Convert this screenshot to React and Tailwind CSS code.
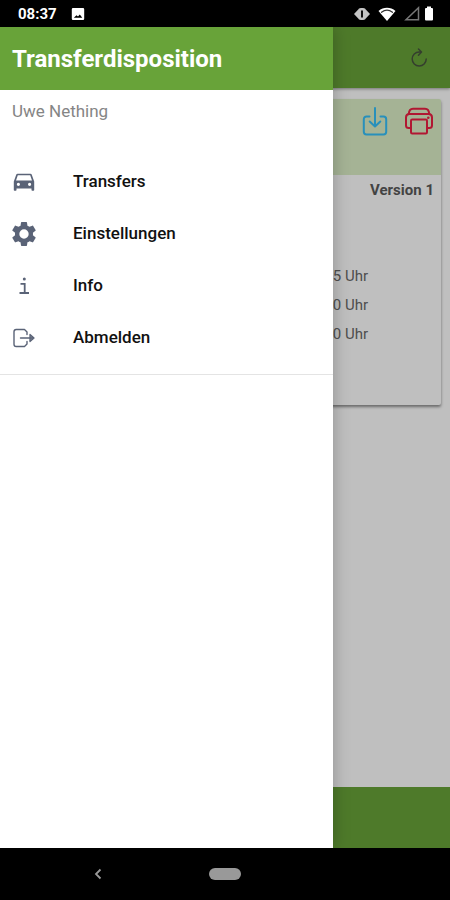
import React from "react";

const stroke = {
  fill: "none",
  stroke: "currentColor",
  strokeLinecap: "round",
  strokeLinejoin: "round",
};

function CarIcon() {
  return (
    <svg viewBox="0 0 24 24" className="size-6" aria-hidden="true">
      <path
        fill="currentColor"
        fillRule="evenodd"
        d="M5.600 3.800h12.800c.7 0 1.200.4 1.400 1L22.200 11.500V20c0 .4-.3.700-.7.700h-1.300c-.4 0-.7-.3-.7-.7V18.500H4.500V20c0 .4-.3.700-.7.700H2.500c-.4 0-.7-.3-.7-.7v-8.500L4.200 4.800c.2-.6.700-1 1.400-1zM5.800 5.300 4 10.500h16l-1.800-5.200zM6.400 12.700a1.600 1.600 0 1 0 0 3.200 1.600 1.600 0 0 0 0-3.200zm11.200 0a1.600 1.600 0 1 0 0 3.200 1.600 1.600 0 0 0 0-3.200z"
      />
    </svg>
  );
}

function GearIcon() {
  return (
    <svg viewBox="2 2 20 20" className="size-6" aria-hidden="true">
      <path
        fill="currentColor"
        d="M19.430 12.980c.04-.32.070-.64.070-.98s-.03-.66-.07-.98l2.110-1.650c.19-.15.240-.42.120-.64l-2-3.460c-.12-.22-.39-.3-.61-.22l-2.490 1c-.52-.4-1.080-.73-1.690-.98l-.38-2.650A.488.488 0 0 0 14 2h-4c-.25 0-.46.180-.49.420l-.38 2.650c-.61.250-1.170.590-1.690.980l-2.490-1c-.23-.09-.49 0-.61.220l-2 3.460c-.13.220-.07.490.120.640l2.110 1.650c-.04.320-.07.650-.07.980s.03.660.070.980l-2.110 1.650c-.19.150-.24.420-.12.640l2 3.460c.12.220.390.300.610.220l2.490-1c.52.400 1.080.730 1.690.980l.38 2.650c.03.240.240.420.490.420h4c.25 0 .46-.18.490-.42l.38-2.650c.61-.25 1.170-.59 1.690-.98l2.490 1c.23.090.490 0 .610-.22l2-3.460c.12-.22.070-.49-.12-.64l-2.110-1.650zM12 15.900a3.900 3.900 0 1 1 0-7.800 3.900 3.900 0 0 1 0 7.800z"
      />
    </svg>
  );
}

function InfoIcon() {
  return (
    <svg viewBox="0 0 24 24" className="size-6" aria-hidden="true">
      <circle cx="12.300" cy="5" r="1.500" fill="currentColor" />
      <path {...stroke} strokeLinecap="butt" strokeLinejoin="miter" strokeWidth="1.800" d="M8.500 9.800h4.200v9M7.500 19h9.500" />
    </svg>
  );
}

function LogoutIcon() {
  return (
    <svg viewBox="0 0 24 24" className="size-6" aria-hidden="true">
      <path {...stroke} strokeWidth="1.400" d="M15 8.500V6L12.500 3.500H4.200C2.900 3.500 2 4.400 2 5.700v12.600c0 1.300.9 2.200 2.200 2.200h8.300L15 18V15.500M8.500 12H21" />
      <path {...stroke} fill="currentColor" fillOpacity="0.7" strokeWidth="1.300" d="M18 8.500l4 3.500-4 3.500z" />
    </svg>
  );
}

function RefreshIcon() {
  return (
    <svg viewBox="0 0 20 20" className="size-5" aria-hidden="true">
      <path {...stroke} strokeWidth="1.500" d="M17.200 11A7 7 0 1 1 10.200 4h2M9.500 1l3 3-3 3.200" />
    </svg>
  );
}

function DownloadIcon() {
  return (
    <svg viewBox="0 0 30 30" className="size-[30px]" aria-hidden="true">
      <path {...stroke} strokeWidth="2" d="M9.500 10.500H6.500c-1.600 0-2.700 1.100-2.700 2.700v12.500c0 1.600 1.100 2.700 2.700 2.700h17c1.600 0 2.700-1.100 2.700-2.700V13.200c0-1.600-1.100-2.700-2.700-2.700h-3M15 2v18M9.700 15.500 15 20.500l5.300-5" />
    </svg>
  );
}

function PrinterIcon() {
  return (
    <svg viewBox="0 0 30 30" className="size-[30px]" aria-hidden="true">
      <g {...stroke} strokeWidth="2">
        <path d="M6.500 22H4.800C3 22 2 21 2 19.500v-8C2 9.500 3.300 8 5.300 8h19.400c2 0 3.300 1.500 3.300 3.500v8c0 1.500-1 2.500-2.800 2.500H23.500" />
        <rect x="7" y="13.500" width="16" height="14" rx="1.200" />
        <path d="M4.800 8C5 4.500 6.500 2.800 9 2.800h12c2.500 0 4 1.700 4.200 5.200" />
      </g>
      <circle cx="24.300" cy="11.800" r="1.300" fill="currentColor" />
    </svg>
  );
}

function StatusBar() {
  return (
    <div className="flex h-[27px] shrink-0 items-center bg-black pr-4 pl-[18px] text-white">
      <span className="pt-0.5 text-[15px] font-bold">08:37</span>
      <svg viewBox="0 0 14 14" className="ml-3.5 size-3.5" aria-hidden="true">
        <path fill="currentColor" fillRule="evenodd" d="M2 1h10a1.200 1.200 0 0 1 1.200 1.200v9.600A1.200 1.200 0 0 1 12 13H2a1.200 1.200 0 0 1-1.200-1.200V2.200A1.200 1.200 0 0 1 2 1zM2.800 10.800h8.500L8.800 7.500 7 9.600 5.500 8.200z" />
      </svg>
      <svg viewBox="0 0 16 14" className="ml-auto h-3.5 w-4" aria-hidden="true">
        <path fill="#c4c4c4" d="M0 7 4 2.800h1.500v8.400H4zM16 7l-4-4.200h-1.500v8.400H12z" />
        <rect x="4" y="1" width="8" height="12" rx="3" fill="#c4c4c4" />
        <path stroke="#111" strokeWidth="2" d="M8 3.500v7" />
      </svg>
      <svg viewBox="0 0 18 14" className="ml-2 h-3.5 w-[18px]" aria-hidden="true">
        <path fill="currentColor" d="M.5 4C5.500-.2 12.500-.2 17.500 4L9 14z" />
        <path {...stroke} stroke="#333" strokeWidth="1.200" d="M3.500 5.300c3.300-2.600 7.700-2.600 11 0" />
      </svg>
      <svg viewBox="0 0 16 15" className="ml-2 h-[15px] w-4" aria-hidden="true">
        <path fill="none" stroke="#777" strokeWidth="1.500" d="M14.500 1.800v12H2z" />
      </svg>
      <svg viewBox="0 0 10 15" className="ml-1 h-[15px] w-2.5" aria-hidden="true">
        <path fill="currentColor" d="M3 .5h4V2h1a1 1 0 0 1 1 1v10.500a1 1 0 0 1-1 1H2a1 1 0 0 1-1-1V3a1 1 0 0 1 1-1h1z" />
      </svg>
    </div>
  );
}

const times = ["5 Uhr", "0 Uhr", "0 Uhr"];

function TransferPage() {
  return (
    <div className="flex flex-1 flex-col bg-white">
      <header className="flex h-[61px] items-center justify-end bg-[#68a339] pr-[21px] text-[#47533d] shadow-[0_1px_3px_rgba(0,0,0,0.4)]">
        <button type="button" aria-label="Aktualisieren"><RefreshIcon /></button>
      </header>
      <main className="flex-1 pt-[11px] pr-[9px] pl-2.5">
        <article className="rounded-xs pb-14 shadow-[0_2px_3px_rgba(0,0,0,0.45)]">
          <div className="flex h-[76px] items-start justify-end gap-3.5 rounded-t-xs bg-[#dcefc7] pt-[7px] pr-[7px]">
            <button type="button" aria-label="Herunterladen" className="text-[#36c0fa]"><DownloadIcon /></button>
            <button type="button" aria-label="Drucken" className="text-[#ec1f43]"><PrinterIcon /></button>
          </div>
          <p className="pt-[3px] pr-[7px] text-right text-[15px] leading-6 font-bold text-[#5a5a5a]">Version 1</p>
          <ul className="pt-[60px] pr-[73px] text-right text-[15px] leading-[29px] text-[#686868]">
            {times.map((time, i) => <li key={i}>{time}</li>)}
          </ul>
        </article>
      </main>
      <footer className="h-[61px] bg-[#68a339]" />
    </div>
  );
}

const menu = [
  { label: "Transfers", Icon: CarIcon },
  { label: "Einstellungen", Icon: GearIcon },
  { label: "Info", Icon: InfoIcon },
  { label: "Abmelden", Icon: LogoutIcon },
];

function Drawer() {
  return (
    <aside className="absolute inset-y-0 left-0 w-[74%] bg-white shadow-[0_0_16px_rgba(0,0,0,0.25)]">
      <h1 className="flex h-[63px] items-center bg-[#68a339] pl-3 text-2xl font-bold text-white">Transferdisposition</h1>
      <p className="pt-[9px] pl-3 text-[17px] leading-6 text-[#858585]">Uwe Nething</p>
      <nav className="border-b border-[#e4e4e4] pt-[33px] pb-2.5">
        {menu.map(({ label, Icon }) => (
          <a key={label} href="#" className="flex h-[52px] items-center gap-[37px] pl-3 text-[#5a6377]">
            <Icon />
            <span className="text-[17px] font-medium text-[#111]">{label}</span>
          </a>
        ))}
      </nav>
    </aside>
  );
}

export default function App() {
  return (
    <div className="flex min-h-screen flex-col bg-black font-['Roboto',sans-serif]">
      <StatusBar />
      <div className="relative flex flex-1 flex-col overflow-hidden">
        <TransferPage />
        <div className="absolute inset-0 bg-black/25" />
        <Drawer />
      </div>
      <div className="grid h-[52px] shrink-0 grid-cols-[1fr_32px_1fr] items-center text-[#999]">
        <button type="button" aria-label="Zurück" className="mr-3.5 justify-self-center">
          <svg viewBox="0 0 12 14" className="h-3.5 w-3" aria-hidden="true">
            <path {...stroke} strokeLinecap="butt" strokeLinejoin="miter" strokeWidth="1.800" d="M8.500 2.500 4 7l4.500 4.500" />
          </svg>
        </button>
        <button type="button" aria-label="Startbildschirm" className="h-3 rounded-full bg-[#999]" />
      </div>
    </div>
  );
}
